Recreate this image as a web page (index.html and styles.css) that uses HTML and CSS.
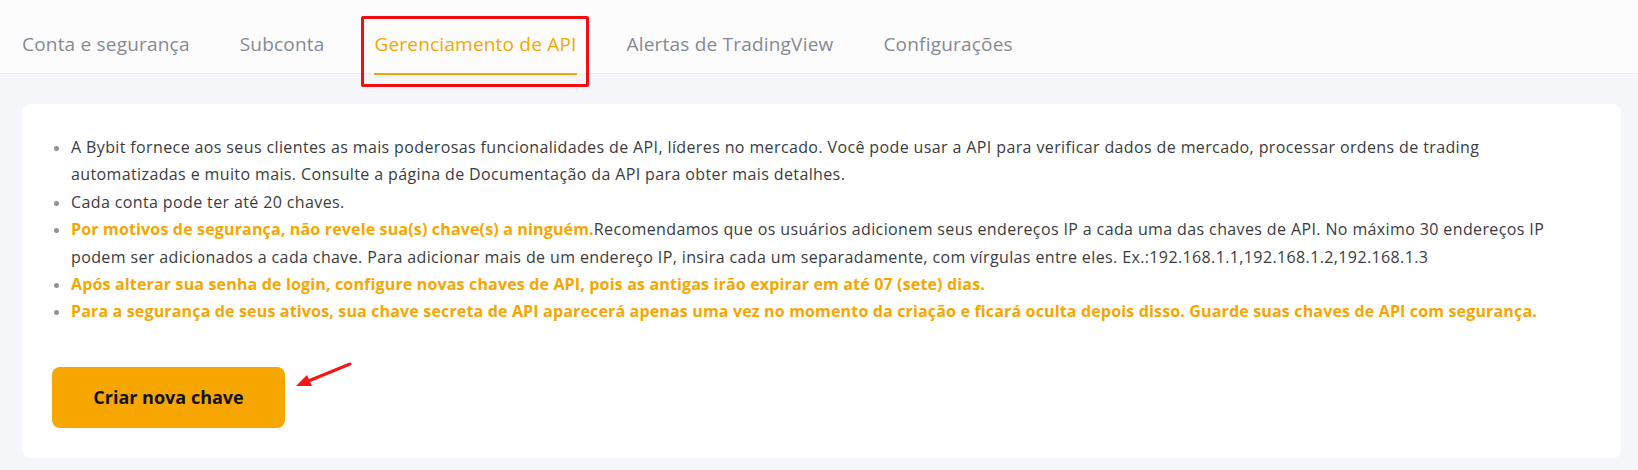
FILE: index.html
```html
<!DOCTYPE html>
<html lang="pt-BR">
<head>
  <meta charset="UTF-8">
  <meta name="viewport" content="width=device-width, initial-scale=1.0">
  <title>Gerenciamento de API</title>
  <link rel="stylesheet" href="styles.css">
</head>
<body>
  <div class="tab-bar">
    <a class="tab">Conta e segurança</a>
    <a class="tab">Subconta</a>
    <a class="tab tab-active">Gerenciamento de API<span class="highlight-box"></span></a>
    <a class="tab">Alertas de TradingView</a>
    <a class="tab">Configurações</a>
  </div>

  <div class="main">
    <div class="card">
      <ul class="notes">
        <li>A Bybit fornece aos seus clientes as mais poderosas funcionalidades de API, líderes no mercado. Você pode usar a API para verificar dados de mercado, processar ordens de trading automatizadas e muito mais. Consulte a página de Documentação da API para obter mais detalhes.</li>
        <li>Cada conta pode ter até 20 chaves.</li>
        <li><strong class="warn">Por motivos de segurança, não revele sua(s) chave(s) a ninguém.</strong>Recomendamos que os usuários adicionem seus endereços IP a cada uma das chaves de API. No máximo 30 endereços IP podem ser adicionados a cada chave. Para adicionar mais de um endereço IP, insira cada um separadamente, com vírgulas entre eles. Ex.:192.168.1.1,192.168.1.2,192.168.1.3</li>
        <li class="warn">Após alterar sua senha de login, configure novas chaves de API, pois as antigas irão expirar em até 07 (sete) dias.</li>
        <li class="warn">Para a segurança de seus ativos, sua chave secreta de API aparecerá apenas uma vez no momento da criação e ficará oculta depois disso. Guarde suas chaves de API com segurança.</li>
      </ul>

      <div class="actions">
        <button class="create-button">Criar nova chave</button>
        <svg class="arrow" width="60" height="30" viewBox="0 0 60 30">
          <line x1="56" y1="3" x2="12" y2="21" stroke="#f51616" stroke-width="3" stroke-linecap="round"/>
          <polygon points="2,25 13,14 18,25" fill="#f51616"/>
        </svg>
      </div>
    </div>
  </div>
</body>
</html>
```

FILE: styles.css
```css
body {
  margin: 0;
  font-family: "Open Sans", "Noto Sans", sans-serif;
  background-color: #f5f6fa;
  color: #3a3c41;
}

.tab-bar {
  display: flex;
  gap: 50px;
  height: 74px;
  padding-left: 22px;
  background-color: #fcfcfd;
  border-bottom: 1px solid #eceef2;
  box-sizing: border-box;
}

.tab {
  position: relative;
  display: flex;
  align-items: center;
  padding-top: 14px;
  height: 74px;
  box-sizing: border-box;
  font-size: 19px;
  letter-spacing: 0.2px;
  color: #858a93;
  cursor: pointer;
}

.tab-active {
  color: #f7a600;
}

.tab-active::after {
  content: "";
  position: absolute;
  left: 0;
  right: 0;
  bottom: -1px;
  height: 2px;
  background-color: #f7a600;
}

.highlight-box {
  position: absolute;
  left: -13px;
  right: -12px;
  top: 16px;
  bottom: -13px;
  border: 3px solid #f50c0c;
  border-radius: 2px;
}

.main {
  padding: 30px 17px 12px 22px;
}

.card {
  background-color: #ffffff;
  border-radius: 8px;
  padding: 30px 30px 30px 30px;
}

.notes {
  margin: 0;
  padding: 0 34px 0 19px;
  list-style: none;
  font-size: 16px;
  line-height: 27.4px;
  letter-spacing: 0.38px;
}

.notes li {
  position: relative;
}

.notes li::before {
  content: "";
  position: absolute;
  left: -17px;
  top: 12px;
  width: 5px;
  height: 5px;
  border-radius: 50%;
  background-color: #8e939b;
}

.warn {
  color: #f7a600;
  font-weight: bold;
  letter-spacing: 0.16px;
}

.actions {
  position: relative;
  margin-top: 41px;
}

.create-button {
  width: 233px;
  height: 61px;
  border: none;
  border-radius: 8px;
  background-color: #f7a600;
  color: #121214;
  font-family: "Open Sans", "Noto Sans", sans-serif;
  font-size: 18px;
  font-weight: bold;
  cursor: pointer;
}

.arrow {
  position: absolute;
  left: 242px;
  top: -6px;
}
```
